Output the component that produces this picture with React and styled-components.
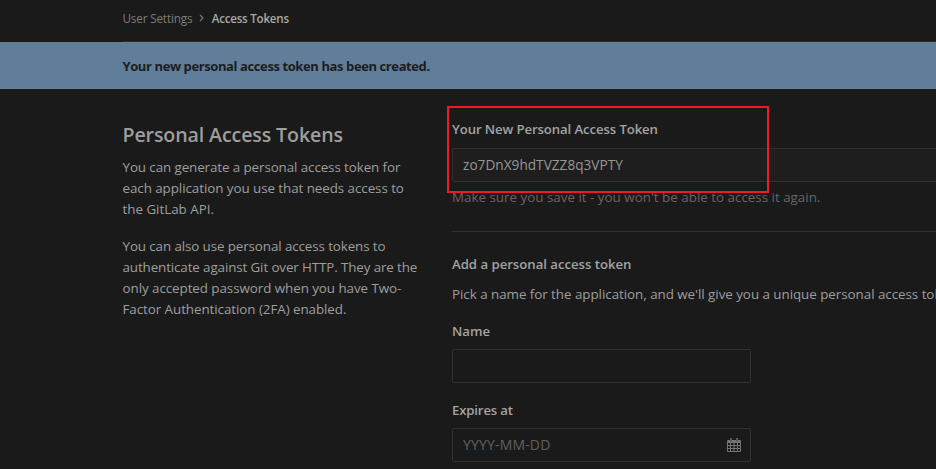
import React from "react";
import styled, { createGlobalStyle } from "styled-components";

const GlobalStyle = createGlobalStyle`
  * { box-sizing: border-box; }
  body {
    margin: 0;
    background: #1a1a1a;
    color: #9e9e9e;
    font-family: "Open Sans", "Noto Sans", sans-serif;
    font-size: 13.4px;
    line-height: 21px;
    overflow: hidden;
  }
`;

const Page = styled.div`
  height: 469px;
  overflow: hidden;
`;

const Breadcrumbs = styled.nav`
  display: flex;
  align-items: center;
  height: 42px;
  margin-left: 123px;
  padding-bottom: 5px;
  border-bottom: 1px solid #2b2b2b;
`;

const Crumb = styled.span`
  margin-left: -0.6px;
  font-size: ${(p) => (p.$current ? "11.6px" : "11.7px")};
  font-weight: ${(p) => (p.$current ? 600 : 400)};
  letter-spacing: ${(p) => (p.$current ? "-0.24px" : "-0.14px")};
  color: ${(p) => (p.$current ? "#a9a9a9" : "#7d7d7d")};
`;

const Chevron = styled.svg`
  width: 5px;
  height: 8px;
  margin: 0 8px 1px 7px;
  fill: none;
  stroke: #777;
  stroke-width: 1.2;
`;

const Banner = styled.div`
  display: flex;
  align-items: center;
  height: 47px;
  padding: 2px 0 0 122.5px;
  background: #607d99;
  color: #1b1d20;
  font-size: 13px;
  font-weight: 700;
`;

const Columns = styled.main`
  display: grid;
  grid-template-columns: 329.5px 700px;
  padding-left: 122.5px;
`;

const Intro = styled.section`
  padding-top: 34px;
`;

const Title = styled.h4`
  margin: 0 0 10px;
  font-size: 19.6px;
  font-weight: 600;
  line-height: 24px;
  letter-spacing: -0.12px;
`;

const Paragraph = styled.p`
  margin: 0 0 ${(p) => p.$gap ?? 16}px;
  white-space: nowrap;
`;

const Line = styled.span`
  display: block;
  letter-spacing: ${(p) => p.$track ?? 0}px;
`;

const Form = styled.section`
  padding-top: 30px;
`;

const Label = styled.label`
  display: block;
  height: 21px;
  margin-bottom: ${(p) => p.$gap ?? 8}px;
  font-size: 13.2px;
  font-weight: 600;
  color: #a3a3a3;
`;

const Field = styled.div`
  display: flex;
  align-items: center;
  justify-content: space-between;
  width: ${(p) => (p.$wide ? "700px" : "299px")};
  height: 34px;
  margin-bottom: ${(p) => p.$gap ?? 0}px;
  padding: 0 9px 0 10px;
  border: 1px solid #303030;
  border-radius: 2px;
  background: ${(p) => (p.$wide ? "#1e1e1e" : "#1a1a1a")};
`;

const Value = styled.span`
  padding-bottom: 2px;
  font-size: 13.6px;
  letter-spacing: 0.035px;
  color: #969696;
`;

const Placeholder = styled.span`
  padding-bottom: 2px;
  font-size: 14px;
  letter-spacing: 0.167px;
  color: #616161;
`;

const Help = styled.div`
  margin-top: 5px;
  font-weight: 500;
  letter-spacing: -0.005px;
  color: #666;
`;

const Divider = styled.hr`
  height: 1px;
  margin: 23px 0 22px;
  border: 0;
  background: #303030;
`;

const Highlight = styled.div`
  position: absolute;
  left: 447px;
  top: 106px;
  width: 322px;
  height: 87px;
  border: 2px solid #ed1c24;
`;

const CalendarSvg = styled.svg`
  width: 14px;
  height: 14px;
  fill: #757575;
`;

const Calendar = () => (
  <CalendarSvg viewBox="0 0 14 14">
    <path
      fillRule="evenodd"
      d="M1 2h2V1q0-1 1-1t1 1v1h4V1q0-1 1-1t1 1v1h2q1 0 1 1v10q0 1-1 1H1q-1 0-1-1V3q0-1 1-1zM1 5v2h2V5zM4 5v2h2.500V5zM7.500 5v2H10V5zM11 5v2h2V5zM1 8v2h2V8zM4 8v2h2.500V8zM7.500 8v2H10V8zM11 8v2h2V8zM1 11v2h2v-2zM4 11v2h2.500v-2zM7.500 11v2H10v-2zM11 11v2h2v-2zM3.700 1v2.500h.6V1zM9.700 1v2.500h.6V1z"
    />
  </CalendarSvg>
);

export default function App() {
  return (
    <Page>
      <GlobalStyle />
      <Breadcrumbs>
        <Crumb>User Settings</Crumb>
        <Chevron viewBox="0 0 5 8">
          <path d="M1 1l3 3-3 3" />
        </Chevron>
        <Crumb $current>Access Tokens</Crumb>
      </Breadcrumbs>
      <Banner>
        <Line $track={-0.4}>Your new personal access token has been created.</Line>
      </Banner>
      <Columns>
        <Intro>
          <Title>Personal Access Tokens</Title>
          <Paragraph>
            <Line $track={-0.1}>You can generate a personal access token for</Line>
            <Line $track={-0.065}>each application you use that needs access to</Line>
            <Line $track={-0.02}>the GitLab API.</Line>
          </Paragraph>
          <Paragraph>
            <Line $track={-0.11}>You can also use personal access tokens to</Line>
            <Line $track={-0.12}>authenticate against Git over HTTP. They are the</Line>
            <Line $track={-0.065}>only accepted password when you have Two-</Line>
            <Line $track={-0.065}>Factor Authentication (2FA) enabled.</Line>
          </Paragraph>
        </Intro>
        <Form>
          <Label>
            <Line $track={-0.11}>Your New Personal Access Token</Line>
          </Label>
          <Field $wide>
            <Value>zo7DnX9hdTVZZ8q3VPTY</Value>
          </Field>
          <Help>Make sure you save it - you won't be able to access it again.</Help>
          <Divider />
          <Label $gap={9}>
            <Line $track={-0.03}>Add a personal access token</Line>
          </Label>
          <Paragraph>
            <Line $track={-0.045}>
              Pick a name for the application, and we'll give you a unique personal access token.
            </Line>
          </Paragraph>
          <Label $gap={7}>
            <Line $track={-0.04}>Name</Line>
          </Label>
          <Field $gap={17} />
          <Label $gap={7}>
            <Line $track={-0.16}>Expires at</Line>
          </Label>
          <Field>
            <Placeholder>YYYY-MM-DD</Placeholder>
            <Calendar />
          </Field>
        </Form>
      </Columns>
      <Highlight />
    </Page>
  );
}
